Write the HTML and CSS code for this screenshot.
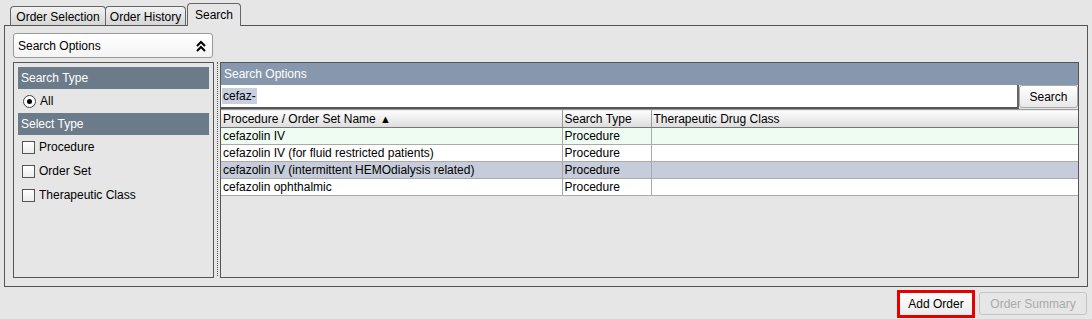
FILE: index.html
```html
<!DOCTYPE html>
<html lang="en">
<head>
  <meta charset="UTF-8" />
  <title>Order Search</title>
  <link rel="stylesheet" href="styles.css">
</head>
<body>

  <div class="tabs">
    <div class="tab tab-sel">Order Selection</div>
    <div class="tab tab-hist">Order History</div>
    <div class="tab tab-search active">Search</div>
  </div>

  <section class="tab-panel">
    <div class="combo">
      <span>Search Options</span>
      <svg class="combo-icon" width="10" height="12" viewBox="0 0 10 12">
        <polyline points="1,6 5,2 9,6" fill="none" stroke="#000" stroke-width="2" />
        <polyline points="1,11 5,7 9,11" fill="none" stroke="#000" stroke-width="2" />
      </svg>
    </div>

    <div class="content">
      <div class="left-panel">
        <div class="group-head">Search Type</div>
        <div class="opt-row">
          <span class="radio"><span class="radio-dot"></span></span>
          <span>All</span>
        </div>
        <div class="group-head">Select Type</div>
        <div class="opt-row"><span class="check"></span><span>Procedure</span></div>
        <div class="opt-row"><span class="check"></span><span>Order Set</span></div>
        <div class="opt-row"><span class="check"></span><span>Therapeutic Class</span></div>
      </div>

      <div class="divider"></div>

      <div class="right-panel">
        <div class="panel-head">Search Options</div>
        <div class="search-row">
          <div class="search-input"><span class="sel-text">cefaz-</span></div>
          <button class="btn-search">Search</button>
        </div>
        <table class="results">
          <colgroup>
            <col style="width:341px">
            <col style="width:89px">
            <col>
          </colgroup>
          <thead>
            <tr>
              <th>Procedure / Order Set Name <span class="sort">&#9650;</span></th>
              <th>Search Type</th>
              <th>Therapeutic Drug Class</th>
            </tr>
          </thead>
          <tbody>
            <tr class="row-first"><td>cefazolin IV</td><td>Procedure</td><td></td></tr>
            <tr><td>cefazolin IV (for fluid restricted patients)</td><td>Procedure</td><td></td></tr>
            <tr class="row-selected"><td>cefazolin IV (intermittent HEMOdialysis related)</td><td>Procedure</td><td></td></tr>
            <tr><td>cefazolin ophthalmic</td><td>Procedure</td><td></td></tr>
          </tbody>
        </table>
      </div>
    </div>
  </section>

  <div class="actions">
    <button class="btn-add">Add Order</button>
    <button class="btn-summary" disabled>Order Summary</button>
  </div>

</body>
</html>
```

FILE: styles.css
```css
* {
  box-sizing: border-box;
}

body {
  font-family: 'Liberation Sans', Arial, sans-serif;
  font-size: 12px;
  color: #000;
  background: #e6e6e6;
  margin: 0;
  width: 1092px;
  height: 319px;
  overflow: hidden;
}

/* tabs */
.tabs {
  height: 25px;
  display: flex;
  align-items: flex-end;
  padding-left: 10px;
}

.tab {
  height: 19px;
  border: 1px solid #666;
  border-bottom: none;
  border-radius: 4px 4px 0 0;
  background: linear-gradient(#f2f2f2, #d6d6d6);
  display: flex;
  align-items: center;
  justify-content: center;
  padding-top: 1px;
}

.tab-sel { width: 96px; }
.tab-hist { width: 81px; margin-left: -1px; }

.tab-search {
  width: 54px;
}

.tab.active {
  height: 23px;
  margin-bottom: -1px;
  margin-left: 1px;
  background: #e6e6e6;
  position: relative;
  z-index: 1;
  padding-bottom: 2px;
}

.tab-panel {
  margin: 0 4px;
  height: 262px;
  border: 1px solid #555;
  padding: 7px 8px 8px 8px;
}

/* combo */
.combo {
  width: 200px;
  height: 25px;
  border: 1px solid #999;
  border-radius: 3px;
  background: linear-gradient(#ffffff, #f3f3f3);
  display: flex;
  align-items: center;
  justify-content: space-between;
  padding: 0 6px 0 4px;
}

.content {
  margin-top: 4px;
  height: 216px;
  display: flex;
}

/* left side */
.left-panel {
  width: 201px;
  border: 1px solid #555;
  padding: 4px;
}

.group-head {
  height: 22px;
  background: #6c7b8a;
  color: #fff;
  padding-left: 3px;
  display: flex;
  align-items: center;
}

.opt-row {
  height: 24px;
  display: flex;
  align-items: center;
  padding-left: 4px;
  gap: 4px;
}

.radio {
  width: 13px;
  height: 13px;
  margin-left: 1px;
  border: 1px solid #444;
  border-radius: 50%;
  background: #fff;
  display: flex;
  align-items: center;
  justify-content: center;
}

.radio-dot {
  width: 5px;
  height: 5px;
  border-radius: 50%;
  background: #000;
}

.check {
  width: 13px;
  height: 13px;
  border: 1px solid #555;
  background: linear-gradient(#ffffff, #ececec);
}

.divider {
  width: 6px;
  display: flex;
  justify-content: center;
  padding-bottom: 2px;
}

.divider::before {
  content: "";
  width: 0;
  border-left: 1px dotted #555;
}

/* right side */
.right-panel {
  width: 859px;
  border: 1px solid #555;
  display: flex;
  flex-direction: column;
}

.panel-head {
  height: 22px;
  background: #8797ad;
  color: #fff;
  padding-left: 3px;
  display: flex;
  align-items: center;
}

.search-row {
  height: 24px;
  display: flex;
}

.search-input {
  flex: 1;
  background: #fff;
  border-right: 2px solid #666;
  border-bottom: 2px solid #555;
  display: flex;
  align-items: center;
  padding-left: 1px;
}

.sel-text {
  background: #c8d0df;
  padding: 0 1px;
  line-height: 16px;
}

.btn-search {
  width: 59px;
  height: 23px;
  font-family: inherit;
  font-size: 12px;
  color: #000;
  border: 1px solid #aaa;
  border-radius: 3px;
  background: linear-gradient(#ffffff, #e8e8e8);
  padding: 0;
}

.results {
  border-collapse: collapse;
  table-layout: fixed;
  width: 100%;
  border-top: 1px solid #999;
}

.results th {
  height: 18px;
  font-weight: normal;
  text-align: left;
  padding: 0 2px;
  background: linear-gradient(#fefefe, #dcdcdc);
  border-right: 1px solid #999;
  border-bottom: 1px solid #777;
  white-space: nowrap;
}

.results th:last-child,
.results td:last-child {
  border-right: none;
}

.sort {
  font-size: 11px;
  margin-left: 1px;
}

.results td {
  height: 17px;
  padding: 0 2px;
  border-right: 1px solid #aaa;
  border-bottom: 1px solid #aaa;
  background: #fff;
  white-space: nowrap;
  overflow: hidden;
}

.row-first td {
  background: #eefcf2;
}

.row-selected td {
  background: #c6ccda;
}

/* bottom buttons */
.actions {
  margin-top: 2px;
  height: 29px;
  display: flex;
  justify-content: flex-end;
  align-items: center;
  gap: 4px;
  padding-right: 5px;
}

.btn-add {
  width: 78px;
  height: 28px;
  font-family: inherit;
  font-size: 12px;
  color: #000;
  border: 3px solid #e60000;
  background: linear-gradient(#ffffff, #ebebeb);
  padding: 0;
}

.btn-summary {
  width: 108px;
  height: 23px;
  font-family: inherit;
  font-size: 12px;
  color: #aaa;
  border: 1px solid #c4c4c4;
  border-radius: 3px;
  background: #e6e6e6;
  padding: 0;
}
```
